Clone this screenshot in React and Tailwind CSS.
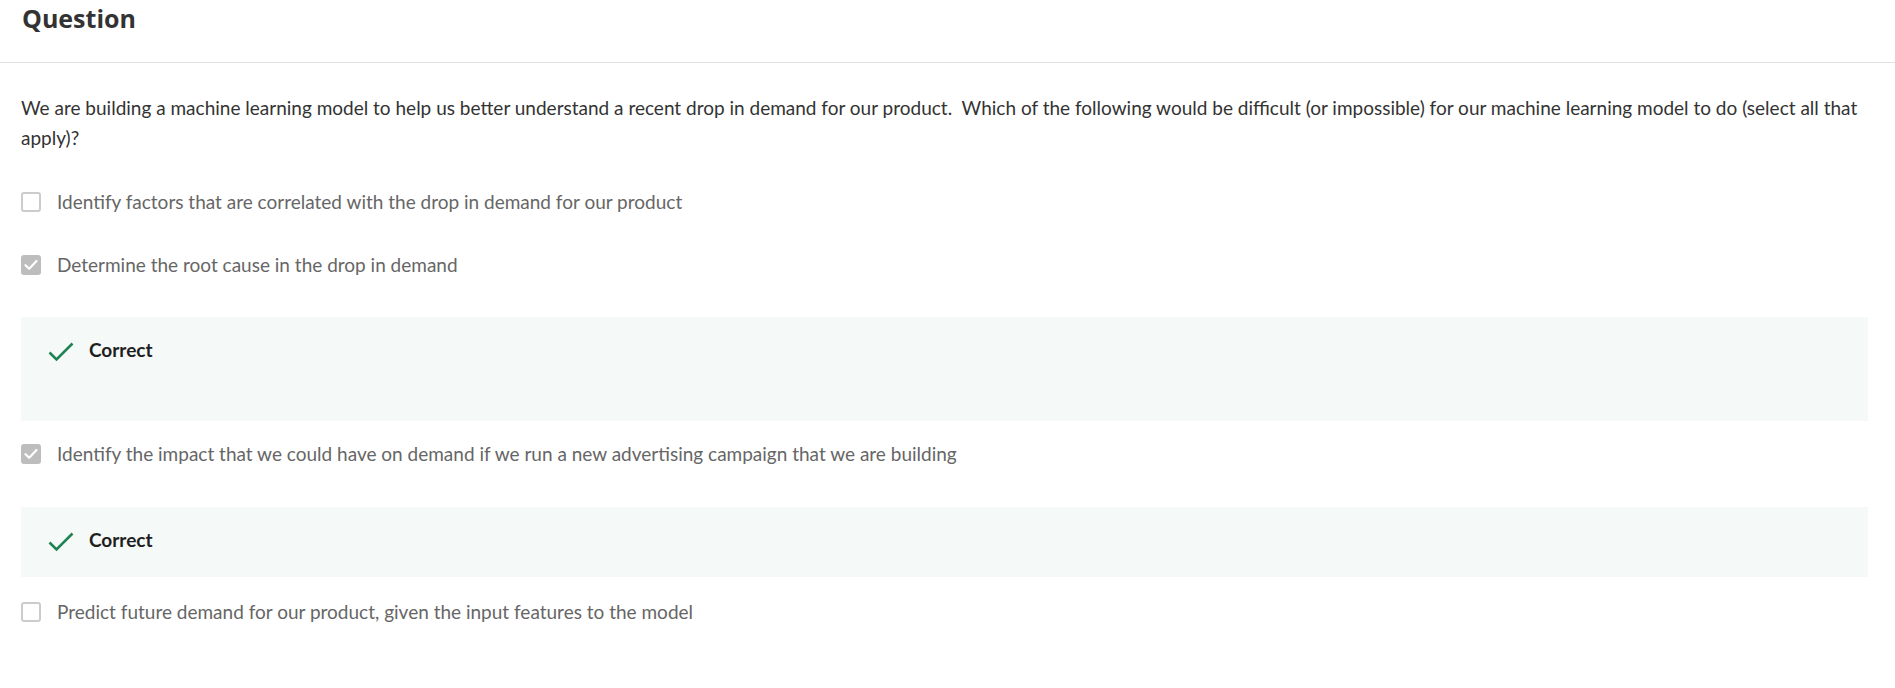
import React from "react";

function Checkbox({ checked }) {
  if (checked) {
    return (
      <div className="w-[20px] h-[20px] rounded-[3px] bg-[#bdbdbd] flex items-center justify-center shrink-0">
        <svg width="16" height="16" viewBox="0 0 16 16" fill="none">
          <path d="M2.5 8.2 L6.2 11.8 L13.5 4" stroke="#ffffff" strokeWidth="2.2" strokeLinecap="round" strokeLinejoin="round" />
        </svg>
      </div>
    );
  }
  return <div className="w-[20px] h-[20px] rounded-[3px] border-2 border-[#cccccc] bg-white shrink-0" />;
}

function Option({ checked, text }) {
  return (
    <div className="flex items-center h-[28px]">
      <Checkbox checked={checked} />
      <span className="ml-[16px] text-[#666666]">{text}</span>
    </div>
  );
}

function Feedback({ extra }) {
  return (
    <div className="bg-[#f5f9f8] pt-[21px] pb-[25px] pl-[27px]">
      <div className="flex items-center h-[24px]">
        <svg width="26" height="20" viewBox="0 0 26 20" fill="none" className="mt-[4px]">
          <path d="M1.5 10.5 L8.5 17.5 L24.5 1.5" stroke="#1f8354" strokeWidth="2.6" />
        </svg>
        <span className="ml-[15px] font-bold text-[#1f1f1f] text-[19px]">Correct</span>
      </div>
      {extra && <div className="h-[34px]" />}
    </div>
  );
}

export default function App() {
  return (
    <div className="bg-white w-full min-h-[688px]" style={{ fontFamily: "'Source Sans Pro', Lato, 'Noto Sans', sans-serif" }}>
      <div className="h-[63px] border-b border-[#e1e1e1] px-[22px]">
        <h1 className="text-[25px] leading-[36px] font-bold text-[#333333]" style={{ fontFamily: "'Open Sans', sans-serif" }}>
          Question
        </h1>
      </div>
      <div className="px-[21px] pr-[27px] text-[19px]">
        <p className="mt-[30px] leading-[30px] text-[#333333]">
          We are building a machine learning model to help us better understand a recent drop in demand for our product.&nbsp; Which of the following would be difficult (or impossible) for our machine learning model to do (select all that apply)?
        </p>
        <div className="mt-[35px]">
          <div className="pb-[35px]">
            <Option checked={false} text="Identify factors that are correlated with the drop in demand for our product" />
          </div>
          <div className="pb-[19px]">
            <Option checked={true} text="Determine the root cause in the drop in demand" />
            <div className="mt-[38px]">
              <Feedback extra />
            </div>
          </div>
          <div className="pb-[21px]">
            <Option checked={true} text="Identify the impact that we could have on demand if we run a new advertising campaign that we are building" />
            <div className="mt-[39px]">
              <Feedback />
            </div>
          </div>
          <div>
            <Option checked={false} text="Predict future demand for our product, given the input features to the model" />
          </div>
        </div>
      </div>
    </div>
  );
}
